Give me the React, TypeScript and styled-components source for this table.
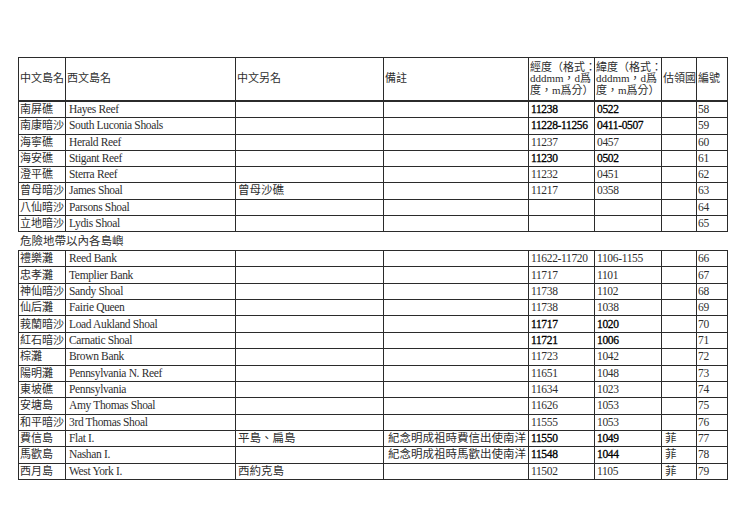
import React from 'react';
import styled, {createGlobalStyle} from 'styled-components';

const GlobalStyle = createGlobalStyle`
  html, body {
    margin: 0;
    padding: 0;
    background: #fff;
  }
  body {
    font-family: "Liberation Serif", "Noto Sans CJK TC", serif;
    color: #2e2e2e;
  }
`;

const Page = styled.div`
  width: 736px;
  height: 509px;
  box-sizing: border-box;
  padding: 57px 0 0 18px;
  overflow: hidden;
`;

const Table = styled.table`
  border-collapse: collapse;
  table-layout: fixed;
  width: 709px;
  font-size: 11.5px;
`;

const HeadCell = styled.th`
  border: 1px solid #2b2b2b;
  border-bottom-width: 2px;
  height: 42px;
  padding: 0 0 0 1px;
  font-weight: normal;
  font-size: 11px;
  text-align: left;
  vertical-align: middle;
  line-height: 11.5px;
  white-space: nowrap;
  overflow: hidden;
`;

type CellProps = {
    $bold?: boolean;
    $center?: boolean;
    $tight?: boolean;
    $small?: boolean;
    $pad?: number;
    $h: number;
}

const Cell = styled.td<CellProps>`
  border: 1px solid #2b2b2b;
  height: ${(p) => p.$h}px;
  padding: 0 0 0 ${(p) => (p.$pad ?? 2)}px;
  font-size: ${(p) => (p.$small ? '11px' : '11.5px')};
  line-height: 15px;
  letter-spacing: ${(p) => (p.$tight ? '-0.35px' : '0')};
  white-space: nowrap;
  overflow: hidden;
  text-align: ${(p) => (p.$center ? 'center' : 'left')};
  color: ${(p) => (p.$bold ? '#000' : '#2e2e2e')};
  -webkit-text-stroke: ${(p) => (p.$bold ? '0.3px #000' : '0')};
`;

const SectionTitle = styled.div`
  height: 18px;
  line-height: 18px;
  padding-left: 2px;
  font-size: 11.5px;
  color: #2e2e2e;
`;

type Row = {
    zh: string;
    en: string;
    alias?: string;
    note?: string;
    lon?: string;
    lat?: string;
    country?: string;
    no: string;
    bold?: boolean;
}

const widths = [47, 170, 148, 145, 66, 67, 35, 31];

const topRows: Row[] = [
    {zh: '南屏礁', en: 'Hayes Reef', lon: '11238', lat: '0522', no: '58', bold: true},
    {zh: '南康暗沙', en: 'South Luconia Shoals', lon: '11228-11256', lat: '0411-0507', no: '59', bold: true},
    {zh: '海寧礁', en: 'Herald Reef', lon: '11237', lat: '0457', no: '60'},
    {zh: '海安礁', en: 'Stigant Reef', lon: '11230', lat: '0502', no: '61', bold: true},
    {zh: '澄平礁', en: 'Sterra Reef', lon: '11232', lat: '0451', no: '62'},
    {zh: '曾母暗沙', en: 'James Shoal', alias: '曾母沙礁', lon: '11217', lat: '0358', no: '63'},
    {zh: '八仙暗沙', en: 'Parsons Shoal', no: '64'},
    {zh: '立地暗沙', en: 'Lydis Shoal', no: '65'},
];

const bottomRows: Row[] = [
    {zh: '禮樂灘', en: 'Reed Bank', lon: '11622-11720', lat: '1106-1155', no: '66'},
    {zh: '忠孝灘', en: 'Templier Bank', lon: '11717', lat: '1101', no: '67'},
    {zh: '神仙暗沙', en: 'Sandy Shoal', lon: '11738', lat: '1102', no: '68'},
    {zh: '仙后灘', en: 'Fairie Queen', lon: '11738', lat: '1038', no: '69'},
    {zh: '莪蘭暗沙', en: 'Load Aukland Shoal', lon: '11717', lat: '1020', no: '70', bold: true},
    {zh: '紅石暗沙', en: 'Carnatic Shoal', lon: '11721', lat: '1006', no: '71', bold: true},
    {zh: '棕灘', en: 'Brown Bank', lon: '11723', lat: '1042', no: '72'},
    {zh: '陽明灘', en: 'Pennsylvania N. Reef', lon: '11651', lat: '1048', no: '73'},
    {zh: '東坡礁', en: 'Pennsylvania', lon: '11634', lat: '1023', no: '74'},
    {zh: '安塘島', en: 'Amy Thomas Shoal', lon: '11626', lat: '1053', no: '75'},
    {zh: '和平暗沙', en: '3rd Thomas Shoal', lon: '11555', lat: '1053', no: '76'},
    {zh: '費信島', en: 'Flat I.', alias: '平島、扁島', note: '紀念明成祖時費信出使南洋', lon: '11550', lat: '1049', country: '菲', no: '77', bold: true},
    {zh: '馬歡島', en: 'Nashan I.', note: '紀念明成祖時馬歡出使南洋', lon: '11548', lat: '1044', country: '菲', no: '78', bold: true},
    {zh: '西月島', en: 'West York I.', alias: '西約克島', lon: '11502', lat: '1105', country: '菲', no: '79'},
];

const Cols = () => (
    <colgroup>
        {widths.map((w, i) => <col key={i} style={{width: w}}/>)}
    </colgroup>
);

// row pitch differs a little between the two halves of the scan
const makeRow = (h: number) => (r: Row) => (
    <tr key={r.no}>
        <Cell $h={h} $pad={1} $small>{r.zh}</Cell>
        <Cell $h={h} $pad={3} $tight>{r.en}</Cell>
        <Cell $h={h}>{r.alias}</Cell>
        <Cell $h={h} $center>{r.note}</Cell>
        <Cell $h={h} $tight $bold={r.bold}>{r.lon}</Cell>
        <Cell $h={h} $tight $bold={r.bold}>{r.lat}</Cell>
        <Cell $h={h} $pad={3}>{r.country}</Cell>
        <Cell $h={h} $pad={1} $tight>{r.no}</Cell>
    </tr>
);

const App: React.FC = () => {
    return (
        <>
            <GlobalStyle/>
            <Page>
                <Table>
                    <Cols/>
                    <thead>
                        <tr>
                            <HeadCell>中文島名</HeadCell>
                            <HeadCell>西文島名</HeadCell>
                            <HeadCell>中文另名</HeadCell>
                            <HeadCell>備註</HeadCell>
                            <HeadCell>經度（格式：<br/>dddmm，d爲<br/>度，m爲分）</HeadCell>
                            <HeadCell>緯度（格式：<br/>dddmm，d爲<br/>度，m爲分）</HeadCell>
                            <HeadCell>估領國</HeadCell>
                            <HeadCell>編號</HeadCell>
                        </tr>
                    </thead>
                    <tbody>
                        {topRows.map(makeRow(15.25))}
                    </tbody>
                </Table>
                <SectionTitle>危險地帶以內各島嶼</SectionTitle>
                <Table>
                    <Cols/>
                    <tbody>
                        {bottomRows.map(makeRow(15.36))}
                    </tbody>
                </Table>
            </Page>
        </>
    );
};

export default App;
